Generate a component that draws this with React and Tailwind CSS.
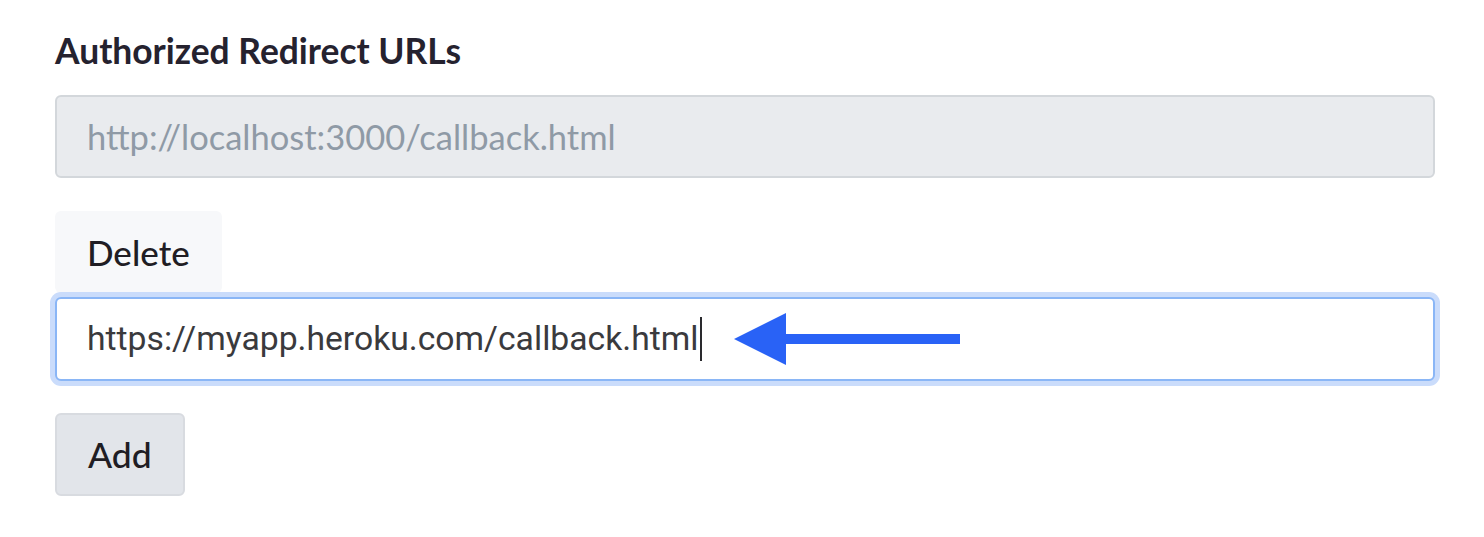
import React from "react";

// Redirect URL settings block
function Arrow() {
  return (
    <svg width="228" height="54" viewBox="0 0 228 54" className="shrink-0">
      <path d="M0 27 L52 1 L52 53 Z" fill="#2962f6" />
      <rect x="50" y="22" width="176" height="10" fill="#2962f6" />
    </svg>
  );
}

export default function App() {
  return (
    <div
      className="min-h-[537px] w-[1484px] bg-white pl-[55px] pr-[49px] pt-[30px]"
      style={{ fontFamily: "Lato, 'Noto Sans', sans-serif" }}
    >
      <h2 className="text-[35.4px] font-bold leading-[42px] text-[#25222f]">
        Authorized Redirect URLs
      </h2>

      {/* Existing url */}
      <div className="mt-[23px] flex h-[83px] items-center rounded-md border-2 border-[#d3d7db] bg-[#e9ebee] pl-[30px] text-[34.5px] text-[#8f9aa6]">
        http://localhost:3000/callback.html
      </div>

      <button className="mt-[33px] flex h-[82px] items-center rounded-md bg-[#f7f8fa] px-[32px] text-[35px] font-medium text-[#1f1d24]">
        Delete
      </button>

      {/* Focused input */}
      <div className="mt-[4px] flex h-[84px] items-center rounded-md border-2 border-[#8ab6f6] bg-white pl-[30px] ring-[5px] ring-[#cadcfb]">
        <span
          className="text-[33.7px] text-[#3a3a3d]"
          style={{ fontFamily: "Roboto, 'Noto Sans', sans-serif" }}
        >
          https://myapp.heroku.com/callback.html
        </span>
        <span className="ml-[2px] h-[44px] w-[2px] bg-[#2a2a2e]" />
        <div className="ml-[32px]">
          <Arrow />
        </div>
      </div>

      <button className="mt-[32px] flex h-[83px] items-center rounded-md border-2 border-[#d8dbe0] bg-[#e2e5ea] px-[31px] text-[35.5px] font-medium text-[#1f1d24]">
        Add
      </button>
    </div>
  );
}
